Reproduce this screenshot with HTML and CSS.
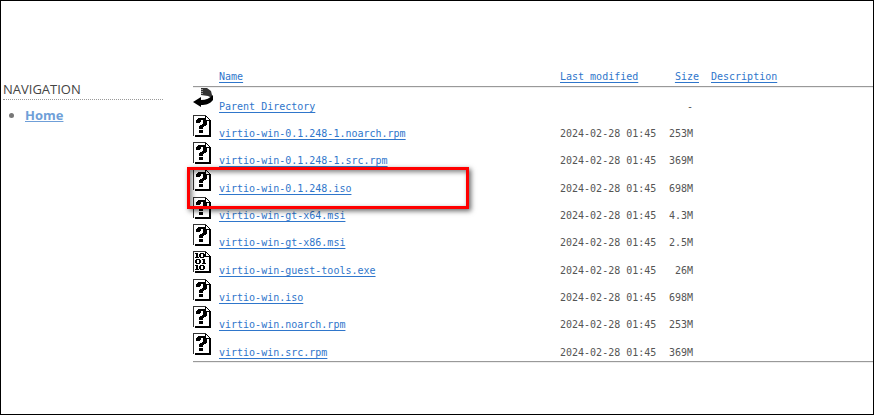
FILE: index.html
```
<!DOCTYPE html>
<html lang="en">
<head>
    <meta charset="UTF-8">
    <meta name="viewport" content="width=device-width, initial-scale=1.0">
    <title>Index of virtio-win</title>
    <link rel="stylesheet" href="styles.css">
</head>
<body>

<!-- Icon shapes shared by the rows -->
<svg class="sprite" aria-hidden="true">
    <symbol id="page" viewBox="0 0 18 22" shape-rendering="crispEdges">
        <path fill="#333" d="M0 0h13v1H0zM0 0h1v21H0z"/>
        <path fill="#fff" d="M1 1h11v4h4v15H1z"/>
        <path fill="#000" d="M16 5h2v17h-2zM2 20h16v2H2zM12 1h1v5h-1zM12 5h6v1h-6zM13 1h1v1h-1zM14 2h1v1h-1zM15 3h1v1h-1zM16 4h1v1h-1z"/>
    </symbol>
    <symbol id="unknown" viewBox="0 0 18 22" shape-rendering="crispEdges">
        <use href="#page"/>
        <path fill="#000" d="M5 3h7v1H5zM4 4h9v1H4zM3 5h5v2H3zM3 7h4v1H3zM10 5h4v4h-4zM9 9h5v1H9zM7 10h6v1H7zM6 11h5v1H6zM6 12h4v2H6zM6 15h4v3H6z"/>
    </symbol>
    <symbol id="binary" viewBox="0 0 18 22" shape-rendering="crispEdges">
        <use href="#page"/>
        <g fill="#000" fill-rule="evenodd">
            <path d="M2 2h3v4h1v1H2V6h1V3H2zM7 2h4v1h1v3h-1v1H7V6H6V3h1zM8 3v3h2V3z"/>
            <path d="M3 8h4v1h1v3H7v1H3v-1H2V9h1zM4 9v3h2V9zM9 8h3v4h1v1H9v-1h1V9H9z"/>
            <path d="M2 14h3v4h1v1H2v-1h1v-3H2zM7 14h4v1h1v3h-1v1H7v-1H6v-3h1zM8 15v3h2v-3z"/>
        </g>
    </symbol>
    <symbol id="back" viewBox="0 0 20 22">
        <path fill="#333" d="M8 0h6l4 3 1 4v3l-4-2-7-1z"/>
        <path stroke="#fff" stroke-dasharray="1 1" d="M9 1v6"/>
        <path fill="#000" d="M0 14l8-5v3c5 0 9-2 12-5v5c-3 4-7 5-12 5v2z"/>
    </symbol>
</svg>

<div class="layout">
    <nav class="sidebar">
        <h2>NAVIGATION</h2>
        <ul>
            <li><a href="#">Home</a></li>
        </ul>
    </nav>

    <main class="listing">
        <table>
            <thead>
                <tr>
                    <th class="icon"></th>
                    <th class="name"><a href="#">Name</a></th>
                    <th class="date"><a href="#">Last modified</a></th>
                    <th class="size"><a href="#">Size</a></th>
                    <th class="desc"><a href="#">Description</a></th>
                </tr>
            </thead>
            <tbody>
                <tr>
                    <td class="icon"><svg width="20" height="22"><use href="#back"/></svg></td>
                    <td><a href="#">Parent Directory</a></td>
                    <td></td>
                    <td class="size">-</td>
                    <td></td>
                </tr>
                <tr>
                    <td class="icon"><svg width="18" height="22"><use href="#unknown"/></svg></td>
                    <td><a href="#">virtio-win-0.1.248-1.noarch.rpm</a></td>
                    <td>2024-02-28 01:45</td>
                    <td class="size">253M</td>
                    <td></td>
                </tr>
                <tr>
                    <td class="icon"><svg width="18" height="22"><use href="#unknown"/></svg></td>
                    <td><a href="#">virtio-win-0.1.248-1.src.rpm</a></td>
                    <td>2024-02-28 01:45</td>
                    <td class="size">369M</td>
                    <td></td>
                </tr>
                <tr>
                    <td class="icon"><svg width="18" height="22"><use href="#unknown"/></svg><span class="highlight"></span></td>
                    <td><a href="#">virtio-win-0.1.248.iso</a></td>
                    <td>2024-02-28 01:45</td>
                    <td class="size">698M</td>
                    <td></td>
                </tr>
                <tr>
                    <td class="icon"><svg width="18" height="22"><use href="#unknown"/></svg></td>
                    <td><a href="#">virtio-win-gt-x64.msi</a></td>
                    <td>2024-02-28 01:45</td>
                    <td class="size">4.3M</td>
                    <td></td>
                </tr>
                <tr>
                    <td class="icon"><svg width="18" height="22"><use href="#unknown"/></svg></td>
                    <td><a href="#">virtio-win-gt-x86.msi</a></td>
                    <td>2024-02-28 01:45</td>
                    <td class="size">2.5M</td>
                    <td></td>
                </tr>
                <tr>
                    <td class="icon"><svg width="18" height="22"><use href="#binary"/></svg></td>
                    <td><a href="#">virtio-win-guest-tools.exe</a></td>
                    <td>2024-02-28 01:45</td>
                    <td class="size">26M</td>
                    <td></td>
                </tr>
                <tr>
                    <td class="icon"><svg width="18" height="22"><use href="#unknown"/></svg></td>
                    <td><a href="#">virtio-win.iso</a></td>
                    <td>2024-02-28 01:45</td>
                    <td class="size">698M</td>
                    <td></td>
                </tr>
                <tr>
                    <td class="icon"><svg width="18" height="22"><use href="#unknown"/></svg></td>
                    <td><a href="#">virtio-win.noarch.rpm</a></td>
                    <td>2024-02-28 01:45</td>
                    <td class="size">253M</td>
                    <td></td>
                </tr>
                <tr>
                    <td class="icon"><svg width="18" height="22"><use href="#unknown"/></svg></td>
                    <td><a href="#">virtio-win.src.rpm</a></td>
                    <td>2024-02-28 01:45</td>
                    <td class="size">369M</td>
                    <td></td>
                </tr>
            </tbody>
        </table>
    </main>
</div>

</body>
</html>
```
FILE: styles.css
```
* {
    box-sizing: border-box;
}
body {
    margin: 0;
    min-height: 100vh;
    border: 1px solid #000;
    background-color: #fff;
    color: #555;
    font-family: "Open Sans", sans-serif;
    font-size: 13px;
}
.sprite {
    display: none;
}
.layout {
    display: flex;
    align-items: flex-start;
    gap: 30px;
    padding: 66px 0 50px 2px;
}

/* Sidebar */
.sidebar {
    flex: 0 0 160px;
    padding-top: 12px;
}
.sidebar h2 {
    margin: 0;
    border-bottom: 1px dotted #999;
    color: #444;
    font-size: 13px;
    font-weight: 400;
    line-height: 20px;
}
.sidebar ul {
    margin: 5px 0 0;
    padding-left: 22px;
    color: #777;
    line-height: 20px;
}
.sidebar a {
    color: #6f9fd8;
    font-weight: 700;
}

/* File listing */
.listing {
    flex: 1;
    min-width: 0;
}
table {
    width: 100%;
    table-layout: fixed;
    border-spacing: 0;
    border-bottom: 1px solid #999;
    box-shadow: 0 1px #eee;
    font-family: "DejaVu Sans Mono", monospace;
    font-size: 10px;
    line-height: 16px;
}
th, td {
    padding: 0;
    text-align: left;
    vertical-align: bottom;
    font-weight: 400;
    white-space: nowrap;
}
th {
    height: 20px;
    padding-top: 2px;
    border-bottom: 1px solid #999;
    vertical-align: top;
}
td {
    height: 27px;
}
tr:nth-child(3n+1) td {
    height: 28px;
}
tbody tr:first-child td {
    border-top: 1px solid #eee;
}
.listing a {
    color: #2f76cb;
    text-underline-offset: 2px;
}
.icon {
    width: 26px;
}
.name {
    width: 341px;
}
.date {
    width: 108px;
}
.size {
    width: 31px;
    text-align: right;
}
td.size {
    padding-right: 6px;
}
.desc {
    padding-left: 12px;
}
td.icon {
    position: relative;
    vertical-align: top;
}
.icon svg {
    display: block;
}

/* Frame round the file to download */
.highlight {
    position: absolute;
    top: -2px;
    left: -6px;
    z-index: 1;
    width: 282px;
    height: 42px;
    border: 3px solid #f00;
    box-shadow: 2px 2px 5px rgba(0, 0, 0, 0.6), inset 2px 2px 5px rgba(0, 0, 0, 0.5);
}
```
